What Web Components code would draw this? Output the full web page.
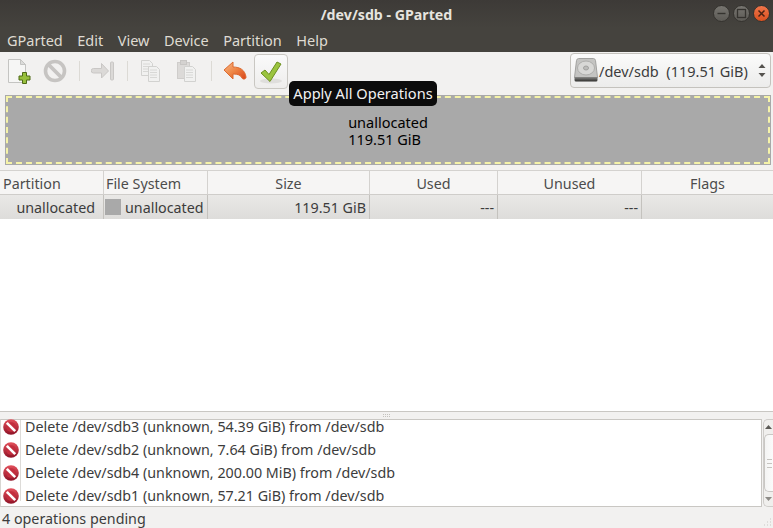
<!DOCTYPE html>
<html>
<head>
<meta charset="utf-8">
<title>/dev/sdb - GParted</title>
<style>
  html, body { margin: 0; height: 100%; overflow: hidden; }
  body {
    width: 773px;
    height: 528px;
    display: flex;
    flex-direction: column;
    position: relative;
    background: #f2f1f0;
    color: #3c3c3c;
    font: 14.5px "Noto Sans", "Open Sans", sans-serif;
  }
  gp-table, gp-oplog { flex: none; }
</style>
</head>
<body>
<gp-titlebar>/dev/sdb - GParted</gp-titlebar>
<gp-menubar></gp-menubar>
<gp-toolbar></gp-toolbar>
<gp-diskmap></gp-diskmap>
<gp-table></gp-table>
<gp-panegrip></gp-panegrip>
<gp-oplog></gp-oplog>
<gp-statusbar>4 operations pending</gp-statusbar>
<gp-tooltip>Apply All Operations</gp-tooltip>

<script>
// grey no-entry sign for the disabled toolbar button
function greyStop() {
  return `<svg width="24" height="24" viewBox="0 0 24 24">
    <circle cx="12" cy="12" r="9.500" fill="#f2f1f0" stroke="#c6c4c2" stroke-width="3.600"/>
    <path d="M5.500 5.500l13 13" stroke="#c6c4c2" stroke-width="3.800"/>
  </svg>`;
}

// red delete sign used in the operation log
function redStop() {
  return `<svg width="16" height="16" viewBox="0 0 16 16">
    <defs><linearGradient id="r" x1="0" x2="0" y1="0" y2="1"><stop offset="0" stop-color="#e4515c"/><stop offset="1" stop-color="#8e1226"/></linearGradient></defs>
    <circle cx="8" cy="8" r="7.800" fill="url(#r)"/>
    <circle cx="8" cy="8" r="4.800" fill="#c42e3e"/>
    <path d="M3.800 3.800l8.400 8.400" stroke="#fff" stroke-width="2.600"/>
  </svg>`;
}

function pageIcon(x, y) {
  return `<path d="M${x}.5 ${y}.5h8l3 3v12h-11z" fill="#f1f1f0" stroke="#d2d2d0"/>
    <path d="M${x + 2} ${y + 4}h7M${x + 2} ${y + 6.500}h7M${x + 2} ${y + 9}h7M${x + 2} ${y + 11.500}h7" stroke="#d8d8d6"/>`;
}

class GpTitlebar extends HTMLElement {
  connectedCallback() {
    this.attachShadow({ mode: 'open' });
    this.shadowRoot.innerHTML = `
      <style>
        :host {
          display: flex;
          flex: none;
          height: 28px;
          align-items: center;
          justify-content: center;
          position: relative;
          background: linear-gradient(#3d3a37, #45433e);
          color: #e6e4df;
          font: 700 14.2px "Noto Sans", sans-serif;
        }
        .controls {
          position: absolute;
          right: 3px;
          top: 5px;
          display: flex;
          gap: 3px;
        }
        .btn {
          width: 17px;
          height: 17px;
          border-radius: 50%;
          background: linear-gradient(#777570, #5c5a55);
          border: 0.5px solid #35332f;
          display: flex;
          box-sizing: border-box;
          align-items: center;
          justify-content: center;
        }
        .close { background: linear-gradient(#f0754a, #d9501f); }
      </style>
      <slot></slot>
      <div class="controls">
        <div class="btn"><svg width="11" height="11"><path d="M1.500 5.500h8" stroke="#35332f" stroke-width="1.400"/></svg></div>
        <div class="btn"><svg width="11" height="11"><rect x="1.500" y="1.500" width="8" height="8" fill="none" stroke="#35332f" stroke-width="1.300"/></svg></div>
        <div class="btn close"><svg width="11" height="11"><path d="M2.500 2.500l6 6M8.500 2.500l-6 6" stroke="#4a2213" stroke-width="1.500"/></svg></div>
      </div>
    `;
  }
}

class GpMenubar extends HTMLElement {
  connectedCallback() {
    this.attachShadow({ mode: 'open' });
    const items = ['GParted', 'Edit', 'View', 'Device', 'Partition', 'Help'];
    this.shadowRoot.innerHTML = `
      <style>
        :host {
          display: flex;
          flex: none;
          height: 24px;
          padding: 0 0 1px 7px;
          box-sizing: border-box;
          gap: 14.5px;
          align-items: center;
          background: #45433e;
          color: #dfdbd2;
          font: 14.5px "Noto Sans", sans-serif;
        }
      </style>
      ${items.map(i => `<span>${i}</span>`).join('')}
    `;
  }
}

class GpToolbar extends HTMLElement {
  connectedCallback() {
    this.attachShadow({ mode: 'open' });
    this.shadowRoot.innerHTML = `
      <style>
        :host {
          display: flex;
          flex: none;
          height: 43px;
          padding: 1px 2px 0 1px;
          box-sizing: border-box;
          align-items: flex-start;
        }
        .tool {
          width: 36px;
          height: 36px;
          display: flex;
          align-items: center;
          justify-content: center;
          box-sizing: border-box;
        }
        .sep {
          width: 12px;
          height: 20px;
          margin-top: 8px;
          display: flex;
          justify-content: center;
        }
        .sep::before { content: ""; width: 1px; background: #dcdad5; }
        .apply {
          width: 34px;
          height: 35px;
          margin: 1px 0 0 1px;
          border: 1px solid #c9c7c2;
          border-radius: 4px;
          background: linear-gradient(#fafafa, #eeedec);
        }
        .combo {
          margin-left: auto;
          width: 201px;
          height: 35px;
          box-sizing: border-box;
          display: flex;
          align-items: center;
          padding-left: 2px;
          border: 1px solid #c4c2bd;
          border-radius: 4px;
          background: linear-gradient(#fbfbfb, #ececeb);
          color: #3c3c3c;
          font: 14.5px "Noto Sans", sans-serif;
          white-space: pre;
        }
        .combo svg.hd { flex: none; margin-top: -1px; }
        .arrows { margin-left: auto; margin-right: 4px; display: flex; }
      </style>
      <div class="tool">
        <svg width="24" height="26" viewBox="0 0 24 26">
          <path d="M1.500 1.500h12l5 5v18h-17z" fill="#f6f6f5" stroke="#c4c4c2"/>
          <path d="M13.500 1.500v5h5z" fill="#dcdcda" stroke="#c4c4c2"/>
          <path d="M15.500 14.500h4v3.500h3.500v4h-3.500v3.500h-4v-3.500h-3.500v-4h3.500z" fill="#97bf3c" stroke="#4f6b17"/>
        </svg>
      </div>
      <div class="tool">${greyStop()}</div>
      <div class="sep"></div>
      <div class="tool">
        <svg width="24" height="20" viewBox="0 0 24 20">
          <path d="M2.500 7.500h8v-5l7 7.500-7 7v-5h-8a2.200 2.200 0 0 1 0-4.500z" fill="#dbd9d7" stroke="#c9c7c5"/>
          <rect x="19.500" y="1" width="3" height="18" rx="1" fill="#dbd9d7" stroke="#c9c7c5"/>
        </svg>
      </div>
      <div class="sep"></div>
      <div class="tool">
        <svg width="21" height="23" viewBox="0 0 21 23">${pageIcon(0, 0)}${pageIcon(7, 6)}</svg>
      </div>
      <div class="tool">
        <svg width="21" height="23" viewBox="0 0 21 23">
          <rect x="0.500" y="2.500" width="12" height="16" fill="#dcdad8" stroke="#cfcdcb"/>
          <rect x="3.500" y="0.500" width="6" height="4" fill="#d4d2d0" stroke="#c8c6c4"/>
          ${pageIcon(7, 6)}
        </svg>
      </div>
      <div class="sep"></div>
      <div class="tool">
        <svg width="24" height="20" viewBox="0 0 24 20">
          <defs><linearGradient id="u" x1="0" x2="1" y1="0" y2="1"><stop offset="0" stop-color="#f7b98a"/><stop offset="0.500" stop-color="#ee8443"/><stop offset="1" stop-color="#d8431a"/></linearGradient></defs>
          <path d="M1 9l9-8v5c7 0 12 3 13 10 .3 2-3 3-4 1-1.500-3-4-4-9-4v5z" fill="url(#u)" stroke="#dc6a30" stroke-linejoin="round"/>
        </svg>
      </div>
      <div class="tool apply">
        <svg width="24" height="24" viewBox="0 0 24 24">
          <ellipse cx="12" cy="21" rx="11" ry="2.500" fill="#dfdedc"/>
          <path d="M2 13l4-3 4 4.500 8-12.500 4 2-11 17.500z" fill="#9bc43f" stroke="#6d9020" stroke-linejoin="round"/>
        </svg>
      </div>
      <div class="combo">
        <svg class="hd" width="26" height="26" viewBox="0 0 26 26">
          <defs><linearGradient id="b" x1="0" x2="0" y1="0" y2="1"><stop offset="0" stop-color="#8a8a88"/><stop offset="1" stop-color="#2e2e2c"/></linearGradient></defs>
          <path d="M5.500 1.500h15q1.500 0 2 2l2 17h-23l2-17q.5-2 2-2z" fill="#c4c4c2" stroke="#a2a2a0"/>
          <ellipse cx="13" cy="11" rx="8.500" ry="7" fill="#d8d8d6" stroke="#aeaeac"/>
          <ellipse cx="13" cy="11" rx="2.500" ry="2" fill="#bcbcba" stroke="#a0a09e"/>
          <path d="M1.500 20h23v3q0 1.500-1.500 1.500h-20q-1.500 0-1.500-1.500z" fill="url(#b)"/>
        </svg><span>/dev/sdb  (119.51 GiB)</span><span class="arrows"><svg width="8" height="17" viewBox="0 0 8 17"><path d="M4 2l3.500 4h-7zM4 15l-3.500-4h7z" fill="#55534f"/></svg></span>
      </div>
    `;
  }
}

class GpDiskmap extends HTMLElement {
  connectedCallback() {
    this.attachShadow({ mode: 'open' });
    this.shadowRoot.innerHTML = `
      <style>
        :host {
          display: flex;
          flex: none;
          height: 70px;
          margin: 0 2px 0 5px;
          box-sizing: border-box;
          background: #a9a9a9;
          padding: 1px;
        }
        .sel {
          flex: 1;
          display: flex;
          align-items: center;
          justify-content: center;
          border: 2px dashed #f5f3a8;
          color: #000;
          font: 14.5px/17px "Noto Sans", sans-serif;
        }
        .label { padding-top: 1px; }
      </style>
      <div class="sel"><div class="label">unallocated<br>119.51 GiB</div></div>
    `;
  }
}

class GpTable extends HTMLElement {
  connectedCallback() {
    this.attachShadow({ mode: 'open' });
    this.shadowRoot.innerHTML = `
      <style>
        :host {
          display: block;
          height: 242px;
          margin-top: 5px;
          box-sizing: border-box;
          background: #fff;
          border-top: 1px solid #d4d2cf;
          border-bottom: 1px solid #c9c7c3;
          font: 14.3px "Noto Sans", sans-serif;
        }
        .grid {
          display: grid;
          grid-template-columns: 104px 104px 162px 128px 144px 1fr;
        }
        .grid > div {
          box-sizing: border-box;
          display: flex;
          align-items: center;
          white-space: nowrap;
          border-right: 1px solid #d4d2cf;
          overflow: hidden;
        }
        .grid > div:nth-child(6n) { border-right: 0; }
        .h {
          height: 24px;
          padding: 2px 3px 0;
          background: #f6f5f4;
          border-bottom: 1px solid #cfcdca;
          color: #4c4c4c;
          justify-content: center;
        }
        .h.l { justify-content: flex-start; }
        .h.fsh { padding-left: 2px; }
        .c {
          height: 24px;
          padding: 0 3px;
          background: linear-gradient(#e9e8e6, #dddcda);
          border-right-color: #c4c2be !important;
          color: #3c3c3c;
          justify-content: flex-end;
        }
        .c.first { padding-right: 8px; }
        .swatch {
          width: 16px;
          height: 16px;
          background: #a9a9a9;
          margin-right: 4px;
          flex: none;
        }
        .fs { justify-content: flex-start; padding-left: 1px; }
      </style>
      <div class="grid">
        <div class="h l">Partition</div>
        <div class="h l fsh">File System</div>
        <div class="h">Size</div>
        <div class="h">Used</div>
        <div class="h">Unused</div>
        <div class="h">Flags</div>
        <div class="c first">unallocated</div>
        <div class="c fs"><span class="swatch"></span>unallocated</div>
        <div class="c">119.51 GiB</div>
        <div class="c">---</div>
        <div class="c">---</div>
        <div class="c"></div>
      </div>
    `;
  }
}

class GpPanegrip extends HTMLElement {
  connectedCallback() {
    this.attachShadow({ mode: 'open' });
    this.shadowRoot.innerHTML = `
      <style>
        :host {
          display: flex;
          flex: none;
          height: 7px;
          align-items: center;
          justify-content: center;
        }
      </style>
      <svg width="8" height="3"><path d="M0 .5h1M2 .5h1M4 .5h1M6 .5h1M0 2.500h1M2 2.500h1M4 2.500h1M6 2.500h1" stroke="#c4c2be"/></svg>
    `;
  }
}

class GpOplog extends HTMLElement {
  connectedCallback() {
    this.attachShadow({ mode: 'open' });
    const ops = [
      'Delete /dev/sdb3 (unknown, 54.39 GiB) from /dev/sdb',
      'Delete /dev/sdb2 (unknown, 7.64 GiB) from /dev/sdb',
      'Delete /dev/sdb4 (unknown, 200.00 MiB) from /dev/sdb',
      'Delete /dev/sdb1 (unknown, 57.21 GiB) from /dev/sdb'
    ];
    this.shadowRoot.innerHTML = `
      <style>
        :host {
          display: flex;
          height: 88px;
          font: 14.3px "Noto Sans", sans-serif;
        }
        .list {
          width: 762px;
          box-sizing: border-box;
          background: #fff;
          border: 1px solid #c9c7c3;
          border-left-color: #d8d6d2;
        }
        .row { display: flex; height: 23px; align-items: center; }
        /* the list is scrolled down a little, so the first row and the last are short */
        .row:first-child { height: 18px; }
        .row:first-child svg, .row:first-child .text { margin-top: -5px; }
        .row:last-child { height: 17px; }
        .row:last-child svg, .row:last-child .text { margin-top: 6px; }
        .icon {
          width: 20px;
          height: 100%;
          flex: none;
          box-sizing: border-box;
          padding-left: 2px;
          border-right: 1px solid #dddbd8;
          display: flex;
          align-items: center;
        }
        .text { padding-left: 4px; color: #3c3c3c; white-space: nowrap; }
        .scroll {
          width: 10px;
          margin-left: 1px;
          display: flex;
          flex-direction: column;
          align-items: center;
          box-sizing: border-box;
          border: 1px solid #cfcdca;
          border-right: 0;
          border-radius: 5px 0 0 5px;
          background: #f0efed;
        }
        .arrow { height: 14px; flex: none; display: flex; align-items: center; justify-content: center; }
        .thumb {
          flex: 1;
          align-self: stretch;
          box-sizing: border-box;
          border: 1px solid #c9c7c4;
          border-right: 0;
          border-radius: 5px 0 0 5px;
          background: linear-gradient(90deg, #f4f4f3, #fbfbfb);
          display: flex;
          align-items: center;
          justify-content: center;
        }
      </style>
      <div class="list">
        ${ops.map(o => `<div class="row"><div class="icon">${redStop()}</div><div class="text">${o}</div></div>`).join('')}
      </div>
      <div class="scroll">
        <div class="arrow"><svg width="7" height="5"><path d="M3.500 0l3.500 4h-7z" fill="#5c5a56"/></svg></div>
        <div class="thumb"><svg width="5" height="9"><path d="M0 .5h5M0 4.500h5M0 8.500h5" stroke="#c6c4c0"/></svg></div>
        <div class="arrow"><svg width="7" height="5"><path d="M3.500 4l3.500-4h-7z" fill="#8d8b87"/></svg></div>
      </div>
    `;
  }
}

class GpStatusbar extends HTMLElement {
  connectedCallback() {
    this.attachShadow({ mode: 'open' });
    this.shadowRoot.innerHTML = `
      <style>
        :host {
          display: flex;
          flex: 1;
          align-items: center;
          padding: 2px 0 0 2px;
          box-sizing: border-box;
          position: relative;
          color: #3c3c3c;
          font: 14.3px "Noto Sans", sans-serif;
        }
        svg { position: absolute; right: 1px; bottom: 1px; }
      </style>
      <slot></slot>
      <svg width="9" height="9"><path d="M7 1h1M4 4h1M7 4h1M1 7h1M4 7h1M7 7h1" stroke="#c9c7c3"/></svg>
    `;
  }
}

class GpTooltip extends HTMLElement {
  connectedCallback() {
    this.attachShadow({ mode: 'open' });
    this.shadowRoot.innerHTML = `
      <style>
        :host {
          position: absolute;
          left: 289px;
          top: 81px;
          width: 148px;
          height: 25px;
          padding-bottom: 1px;
          box-sizing: border-box;
          display: flex;
          align-items: center;
          justify-content: center;
          background: #0c0c0c;
          border-radius: 5px;
          color: #f2f2f2;
          font: 14.6px "Noto Sans", sans-serif;
          white-space: nowrap;
        }
      </style>
      <slot></slot>
    `;
  }
}

customElements.define('gp-titlebar', GpTitlebar);
customElements.define('gp-menubar', GpMenubar);
customElements.define('gp-toolbar', GpToolbar);
customElements.define('gp-diskmap', GpDiskmap);
customElements.define('gp-table', GpTable);
customElements.define('gp-panegrip', GpPanegrip);
customElements.define('gp-oplog', GpOplog);
customElements.define('gp-statusbar', GpStatusbar);
customElements.define('gp-tooltip', GpTooltip);
</script>
</body>
</html>
